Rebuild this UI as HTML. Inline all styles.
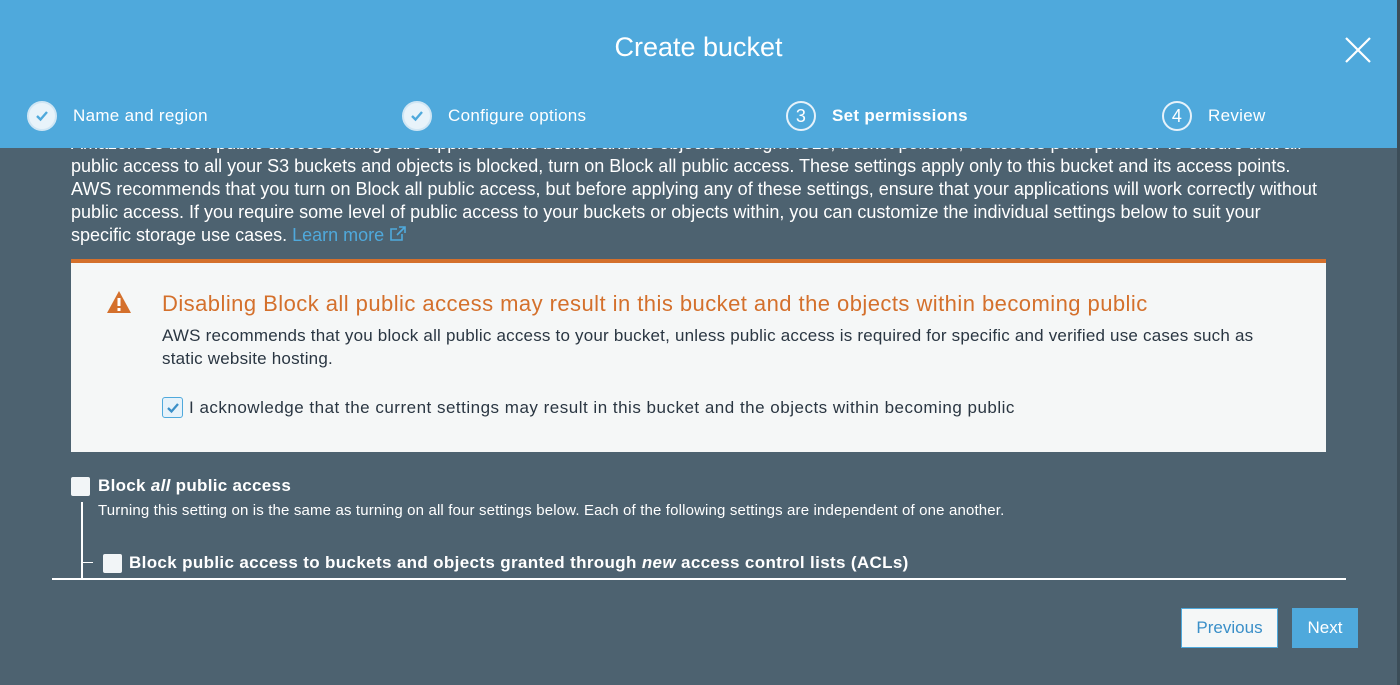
<!DOCTYPE html>
<html><head><style>
body{margin:0;width:1400px;height:685px;background:#4d6270;font-family:"Liberation Sans",Arial,sans-serif;position:relative;overflow:hidden;color:#fff}
.hdr{position:absolute;left:0;top:0;width:1397px;height:148px;background:#4fa9dc;z-index:2}
.title{position:absolute;top:32px;width:100%;text-align:center;font-size:27px}
.x{position:absolute;left:1345px;top:37px}
.step{position:absolute;top:101px;font-size:17px;display:flex;align-items:center;letter-spacing:0.3px}
.circ{width:30px;height:30px;border:2px solid #e6f2fa;border-radius:50%;box-sizing:border-box;display:flex;align-items:center;justify-content:center;margin-right:16px;font-size:18px}
.chk{background:#e8f3fa;border-color:#d0e6f4}
.intro{position:absolute;left:71px;top:132px;font-size:18px;letter-spacing:0px;line-height:23px;width:1290px;white-space:nowrap}
.warn{position:absolute;left:71px;top:259px;width:1255px;height:193px;background:#f5f7f7;border-top:4px solid #d4702c;box-sizing:border-box}
.wt{position:absolute;left:91px;top:28px;font-size:22px;letter-spacing:0.45px;color:#d4702c;white-space:nowrap}
.wb{position:absolute;left:91px;top:61px;font-size:17px;letter-spacing:0.2px;line-height:23px;color:#2a3642;width:1140px}
.ack{position:absolute;left:91px;top:134px;font-size:17px;letter-spacing:0.5px;color:#2a3642;display:flex;align-items:center;white-space:nowrap}
.cb{width:19px;height:19px;background:#f2f5f7;border-radius:2px;display:inline-block}
</style></head><body>
<div class="hdr">
<div class="title">Create bucket</div>
<svg class="x" width="26" height="26"><path d="M1 1L25 25M25 1L1 25" stroke="#fff" stroke-width="2.2"/></svg>
<div class="step" style="left:27px"><div class="circ chk"><svg width="16" height="16"><path d="M3 8l3.5 3.5L13 4" stroke="#4fa9dc" stroke-width="2.4" fill="none"/></svg></div>Name and region</div>
<div class="step" style="left:402px"><div class="circ chk"><svg width="16" height="16"><path d="M3 8l3.5 3.5L13 4" stroke="#4fa9dc" stroke-width="2.4" fill="none"/></svg></div>Configure options</div>
<div class="step" style="left:786px;font-weight:bold"><div class="circ" style="font-weight:normal">3</div>Set permissions</div>
<div class="step" style="left:1162px"><div class="circ">4</div>Review</div>
</div>
<div class="intro">Amazon S3 block public access settings are applied to this bucket and its objects through ACLs, bucket policies, or access point policies. To ensure that all<br>public access to all your S3 buckets and objects is blocked, turn on Block all public access. These settings apply only to this bucket and its access points.<br>AWS recommends that you turn on Block all public access, but before applying any of these settings, ensure that your applications will work correctly without<br>public access. If you require some level of public access to your buckets or objects within, you can customize the individual settings below to suit your<br>specific storage use cases. <span style="color:#4fa9dc">Learn more</span> <svg width="18" height="16" style="vertical-align:-1px"><path d="M8 3H2v11h11V8" stroke="#4fa9dc" stroke-width="1.6" fill="none"/><path d="M10 1h6v6M16 1L8 9" stroke="#4fa9dc" stroke-width="1.6" fill="none"/></svg></div>
<div class="warn">
<svg style="position:absolute;left:35px;top:27px" width="26" height="24"><path d="M13 1L25 23H1Z" fill="#d4702c"/><rect x="11.5" y="8" width="3" height="8" fill="#fff"/><rect x="11.5" y="18" width="3" height="3" fill="#fff"/></svg>
<div class="wt">Disabling Block all public access may result in this bucket and the objects within becoming public</div>
<div class="wb">AWS recommends that you block all public access to your bucket, unless public access is required for specific and verified use cases such as<br>static website hosting.</div>
<div class="ack"><span style="width:19px;height:19px;border:1px solid #4fa9dc;border-radius:3px;background:#e6f2fa;margin-right:6px;display:inline-flex;align-items:center;justify-content:center"><svg width="14" height="12"><path d="M2 6l3.5 3.5L12 2" stroke="#3a8fc8" stroke-width="2.3" fill="none"/></svg></span>I acknowledge that the current settings may result in this bucket and the objects within becoming public</div>
</div>
<div style="position:absolute;left:71px;top:476px;display:flex;align-items:center;font-size:17px;font-weight:bold;letter-spacing:0.3px"><span class="cb" style="margin-right:8px"></span>Block&nbsp;<i>all</i>&nbsp;public access</div>
<div style="position:absolute;left:98px;top:502px;font-size:15px;letter-spacing:0.15px;white-space:nowrap">Turning this setting on is the same as turning on all four settings below. Each of the following settings are independent of one another.</div>
<div style="position:absolute;left:81px;top:502px;width:2px;height:77px;background:#fff"></div>
<div style="position:absolute;left:83px;top:562px;width:10px;height:1px;background:#fff"></div>
<div style="position:absolute;left:103px;top:553px;display:flex;align-items:center;font-size:17px;font-weight:bold;letter-spacing:0.35px;white-space:nowrap"><span class="cb" style="margin-right:7px"></span>Block public access to buckets and objects granted through&nbsp;<i>new</i>&nbsp;access control lists (ACLs)</div>
<div style="position:absolute;left:52px;top:578px;width:1294px;height:2px;background:#fff"></div>
<div style="position:absolute;left:1181px;top:608px;width:97px;height:40px;background:#f5f7f7;border:1px solid #4fa9dc;box-sizing:border-box;color:#3a8fc8;font-size:17px;text-align:center;line-height:38px">Previous</div>
<div style="position:absolute;left:1292px;top:608px;width:66px;height:40px;background:#4fa9dc;font-size:17px;text-align:center;line-height:40px">Next</div>
<div style="position:absolute;left:1397px;top:0;width:3px;height:685px;background:#3c4d58"></div>
</body></html>
